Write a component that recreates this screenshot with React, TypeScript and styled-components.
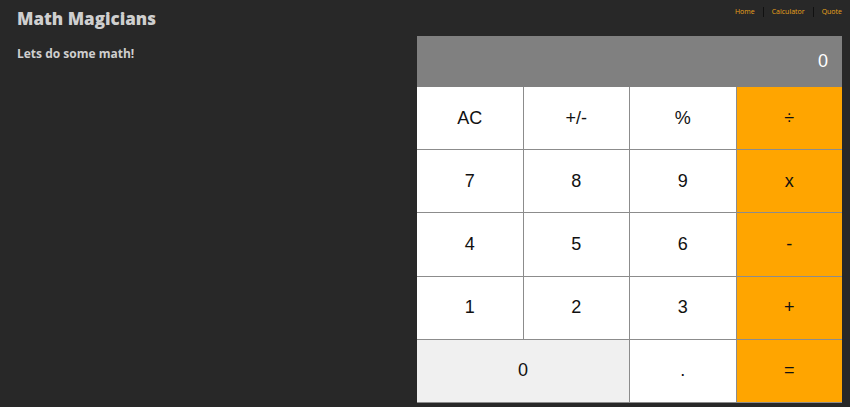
import React from 'react';
import styled, { createGlobalStyle } from 'styled-components';

const GlobalStyle = createGlobalStyle`
  body {
    margin: 0;
    background: #282828;
    font-family: 'Open Sans', 'Liberation Sans', sans-serif;
  }
`;

const Page = styled.div`
  display: flex;
  flex-direction: column;
  min-height: 407px;
`;

const Header = styled.header`
  display: flex;
  justify-content: space-between;
  align-items: flex-start;
  padding: 7px 8px 0 17px;
  height: 29px;
`;

const Title = styled.h1`
  margin: 0;
  font-size: 17px;
  font-weight: 800;
  color: #cfcfcf;
`;

const Nav = styled.nav`
  display: flex;
  align-items: center;
  padding-top: 0;
`;

const NavLink = styled.a`
  font-size: 7px;
  color: #e9a21a;
  text-decoration: none;
  padding: 0 8px;
  line-height: 10px;
  border-left: ${({ $first }: { $first?: boolean }) => ($first ? 'none' : '1px solid #111')};

  &:last-child {
    padding-right: 0;
  }
`;

const Main = styled.main`
  display: flex;
  justify-content: space-between;
  align-items: flex-start;
  padding: 0 8px 0 17px;
`;

const Intro = styled.p`
  margin: 9px 0 0;
  font-size: 12px;
  font-weight: 700;
  color: #cfcfcf;
`;

const Calculator = styled.div`
  width: 425px;
  display: grid;
  grid-template-columns: repeat(4, 1fr);
  grid-template-rows: 50px repeat(5, 1fr);
  height: 366px;
  gap: 1px;
  background: #8c8c8c;
  border-bottom: 1px solid #8c8c8c;
  font-family: 'Liberation Sans', Arial, sans-serif;
`;

const Display = styled.div`
  grid-column: 1 / -1;
  background: #808080;
  color: #fff;
  font-size: 18px;
  display: flex;
  align-items: center;
  justify-content: flex-end;
  padding-right: 14px;
  margin-bottom: -1px;
`;

const Key = styled.button<{ $tone?: 'op' | 'zero'; $wide?: boolean }>`
  border: none;
  margin: 0;
  font-family: inherit;
  font-size: 18px;
  color: #111;
  cursor: pointer;
  grid-column: ${({ $wide }) => ($wide ? 'span 2' : 'auto')};
  background: ${({ $tone }) =>
    $tone === 'op' ? '#ffa500' : $tone === 'zero' ? '#f0f0f0' : '#fff'};
`;

const rows: string[][] = [
  ['AC', '+/-', '%', '÷'],
  ['7', '8', '9', 'x'],
  ['4', '5', '6', '-'],
  ['1', '2', '3', '+'],
];

const App = () => (
  <>
    <GlobalStyle />
    <Page>
      <Header>
        <Title>Math Magicians</Title>
        <Nav>
          <NavLink href="#" $first>Home</NavLink>
          <NavLink href="#">Calculator</NavLink>
          <NavLink href="#">Quote</NavLink>
        </Nav>
      </Header>
      <Main>
        <Intro>Lets do some math!</Intro>
        <Calculator>
          <Display>0</Display>
          {rows.map((row) =>
            row.map((k, i) => (
              <Key key={k} $tone={i === 3 ? 'op' : undefined}>
                {k}
              </Key>
            )),
          )}
          <Key $tone="zero" $wide>0</Key>
          <Key>.</Key>
          <Key $tone="op">=</Key>
        </Calculator>
      </Main>
    </Page>
  </>
);

export default App;
